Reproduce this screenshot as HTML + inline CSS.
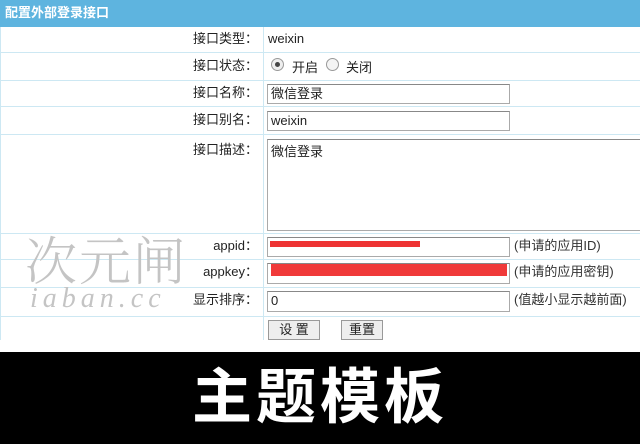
<!DOCTYPE html><html><head><meta charset="utf-8"><style>
body{margin:0;width:640px;height:444px;position:relative;overflow:hidden;background:#fff;font-family:"Liberation Sans","Noto Sans CJK SC",sans-serif;font-size:13px;color:#222;line-height:16px}
.a{position:absolute}
.hl{position:absolute;left:0;width:640px;height:1px;background:#cde8f3}
.lab{position:absolute;right:382px;text-align:right;font-size:13px}
.in{position:absolute;left:267px;border:1px solid #aaa;border-top-color:#888;background:#fff;box-sizing:border-box;padding:1px 3px;font-size:13px}
.note{position:absolute;left:514px;color:#333;font-size:13px}
</style></head><body>
<div class="a" style="left:0;top:0;width:640px;height:27px;background:#5eb4df"></div>
<div class="a" style="left:5px;top:5px;color:#fff;font-weight:bold;font-size:13px">配置外部登录接口</div>
<div class="a" style="left:263px;top:27px;width:1px;height:313px;background:#cde8f3"></div>
<div class="a" style="left:0;top:27px;width:1px;height:313px;background:#cde8f3"></div>
<div class="hl" style="top:52px"></div><div class="hl" style="top:80px"></div><div class="hl" style="top:106px"></div><div class="hl" style="top:134px"></div><div class="hl" style="top:233px"></div><div class="hl" style="top:259px"></div><div class="hl" style="top:287px"></div><div class="hl" style="top:316px"></div>
<div class="lab" style="top:31px">接口类型：</div><div class="a" style="left:268px;top:31px">weixin</div>
<div class="lab" style="top:58px">接口状态：</div>
<div class="a" style="left:271px;top:58px;width:11px;height:11px;border-radius:50%;border:1px solid #999;background:#eee"><div class="a" style="left:3px;top:3px;width:5px;height:5px;border-radius:50%;background:#444"></div></div>
<div class="a" style="left:292px;top:60px">开启</div>
<div class="a" style="left:326px;top:58px;width:11px;height:11px;border-radius:50%;border:1px solid #999;background:#f4f4f4"></div>
<div class="a" style="left:346px;top:60px">关闭</div>
<div class="lab" style="top:85px">接口名称：</div><div class="in" style="top:84px;width:243px;height:20px">微信登录</div>
<div class="lab" style="top:112px">接口别名：</div><div class="in" style="top:111px;width:243px;height:20px">weixin</div>
<div class="lab" style="top:142px">接口描述：</div><div class="in" style="top:139px;width:375px;height:92px;padding-top:4px">微信登录</div>
<div class="lab" style="top:238px">appid：</div><div class="in" style="top:237px;width:243px;height:20px"></div>
<div class="a" style="left:270px;top:241px;width:150px;height:6px;background:#e33"></div>
<div class="note" style="top:238px">(申请的应用ID)</div>
<div class="lab" style="top:264px">appkey：</div><div class="in" style="top:263px;width:243px;height:21px"></div>
<div class="a" style="left:271px;top:264px;width:236px;height:12px;background:#f03a3a"></div>
<div class="note" style="top:264px">(申请的应用密钥)</div>
<div class="lab" style="top:292px">显示排序：</div><div class="in" style="top:291px;width:243px;height:21px">0</div>
<div class="note" style="top:292px">(值越小显示越前面)</div>
<div class="a" style="left:268px;top:320px;width:52px;height:20px;border:1px solid #999;background:#eee;text-align:center;line-height:18px;box-sizing:border-box">设 置</div>
<div class="a" style="left:341px;top:320px;width:42px;height:20px;border:1px solid #999;background:#eee;text-align:center;line-height:18px;box-sizing:border-box">重置</div>
<div class="a" style="left:25px;top:228px;font-size:52px;line-height:60px;color:#c4c4c4;font-family:'Noto Serif CJK SC',serif;font-weight:300;letter-spacing:2px">次元闸</div>
<div class="a" style="left:30px;top:283px;font-size:28px;line-height:32px;color:#c4c4c4;font-style:italic;letter-spacing:5px;font-family:'Liberation Serif',serif">iaban.cc</div>
<div class="a" style="left:0;top:352px;width:640px;height:92px;background:#000"></div>
<div class="a" style="left:0;top:360px;width:640px;text-align:center;color:#fff;font-size:60px;font-weight:bold;line-height:76px;letter-spacing:4px">主题模板</div>
</body></html>
